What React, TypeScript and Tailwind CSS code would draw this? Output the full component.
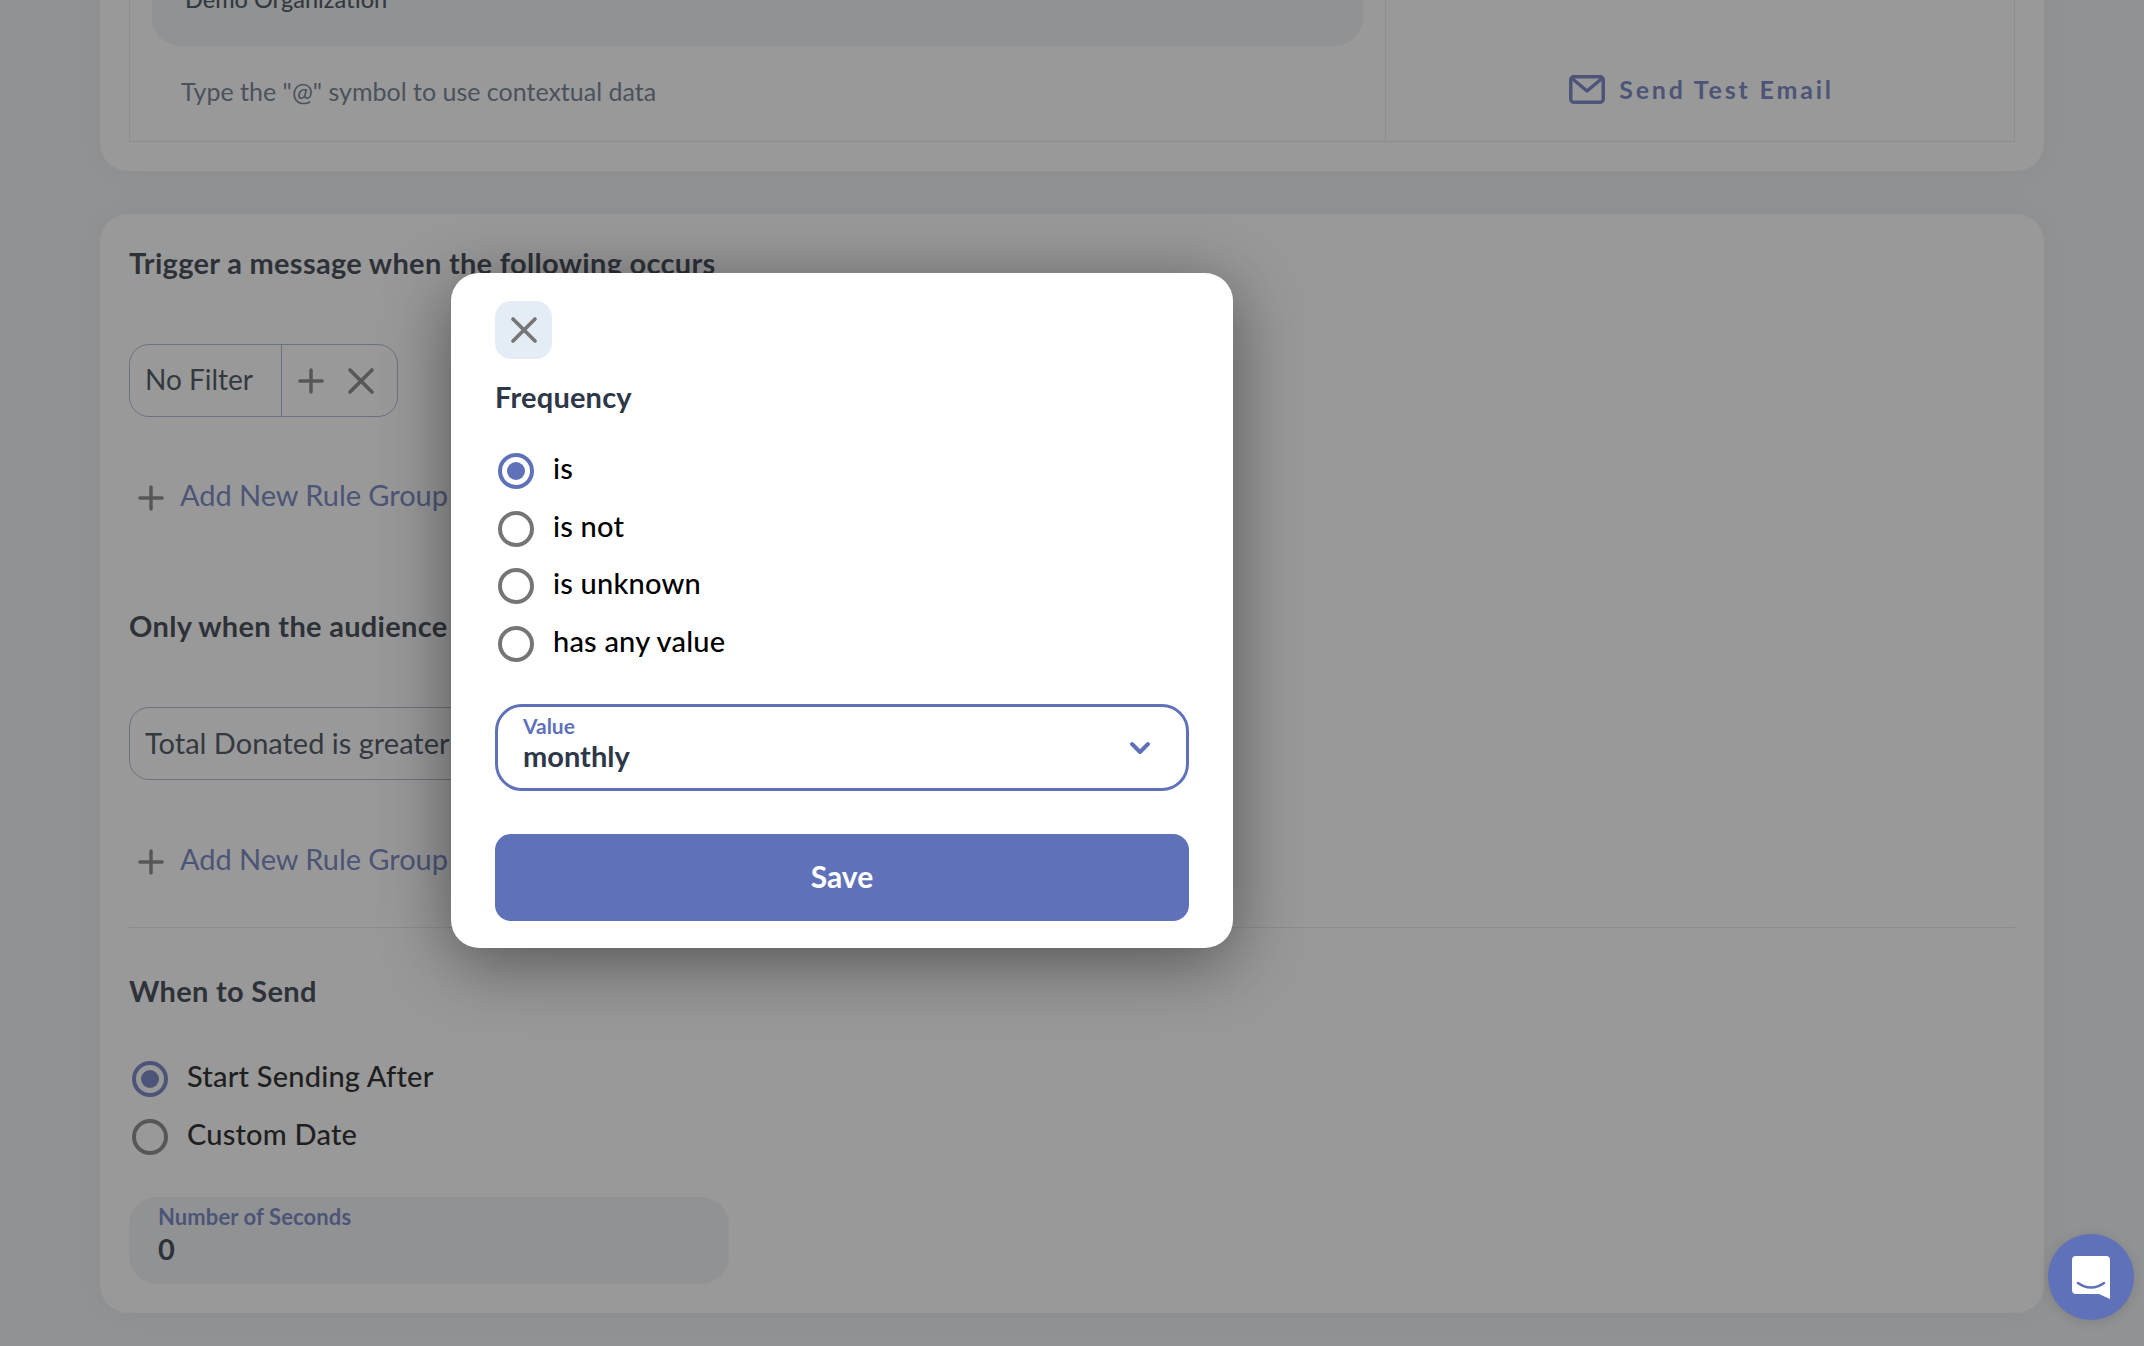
import { ChevronDown, Plus, X } from "lucide-react";

const Radio = ({ label, checked = false }: { label: string; checked?: boolean }) => (
  <div className="flex items-center gap-[19px]">
    <div
      className={`flex size-[36px] ml-[3px] shrink-0 items-center justify-center rounded-full border-[4px] bg-transparent ${
        checked ? "border-[#5f71b9]" : "border-[#757575]"
      }`}
    >
      {checked && <div className="size-[18px] rounded-full bg-[#5f71b9]" />}
    </div>
    <span className="pb-[6px] text-[29px] leading-[30px] font-medium tracking-[0.2px] text-black">{label}</span>
  </div>
);

const FilterBox = ({ children }: { children: React.ReactNode }) => (
  <div className="flex h-[73px] w-max items-stretch rounded-[20px] border border-[#9db0c4]">{children}</div>
);

const AddRule = () => (
  <div className="flex items-center gap-[10px] pl-[3px]">
    <Plus size={38} strokeWidth={2.2} className="relative top-[3px] text-[#757575]" />
    <span className="text-[29px] leading-[36px] tracking-[-0.05px] text-[#5f71b9]">Add New Rule Group</span>
  </div>
);

const Heading = ({ children }: { children: React.ReactNode }) => (
  <h2 className="text-[29px] leading-[36px] font-bold tracking-[0.3px] text-[#1f2937]">{children}</h2>
);

const App = () => {
  return (
    <div className="relative h-screen overflow-hidden bg-[#eef1f3] font-['Lato',sans-serif]">
      <div className="mx-[100px] -mt-[100px] flex flex-col gap-[43px]">
        <section className="rounded-[28px] bg-white px-[29px] pt-[10px] pb-[29px] shadow-[0_0_40px_rgba(0,0,0,0.06)]">
          <div className="flex border border-[#e2e6ea]">
            <div className="w-[1256px] border-r border-[#e2e6ea] px-[22px] pt-[36px] pb-[34px]">
              <div className="h-[99px] rounded-[28px] bg-[#eef1f3] px-[33px] pt-[34px]">
                <div className="text-[23.5px] leading-[36px] font-medium text-[#2d3748]">Demo Organization</div>
              </div>
              <p className="mt-[29px] pl-[29px] text-[25px] leading-[32px] text-[#5a6b7f]">
                Type the "@" symbol to use contextual data
              </p>
            </div>
            <div className="flex flex-1 items-end justify-center pb-[37px] pl-[3px]">
              <div className="flex items-center gap-[14px]">
                <svg width="36" height="29" viewBox="0 0 36 29" fill="none" stroke="#5f71b9" strokeWidth="3.5">
                  <rect x="1.75" y="1.75" width="32.5" height="25.5" rx="3" />
                  <path d="M2.5 3 L18 16 L33.5 3" strokeLinejoin="round" />
                </svg>
                <span className="text-[25px] leading-[30px] font-bold tracking-[2.8px] text-[#5f71b9]">Send Test Email</span>
              </div>
            </div>
          </div>
        </section>

        <section className="flex flex-col rounded-[28px] bg-white px-[29px] pt-[31px] pb-[29px] shadow-[0_0_40px_rgba(0,0,0,0.06)]">
          <Heading>Trigger a message when the following occurs</Heading>
          <div className="mt-[63px]">
            <FilterBox>
              <div className="flex w-[152px] items-center border-r border-[#9db0c4] pb-[3px] pl-[15px] text-[28px] leading-[36px] text-[#2d3748]">
                No Filter
              </div>
              <div className="flex w-[115px] items-center gap-[9px] pl-[10px]">
                <Plus size={38} strokeWidth={2.2} className="text-[#757575]" />
                <X size={44} strokeWidth={2} className="text-[#757575]" />
              </div>
            </FilterBox>
          </div>
          <div className="mt-[59px]">
            <AddRule />
          </div>
          <div className="mt-[94px]">
            <Heading>Only when the audience</Heading>
          </div>
          <div className="mt-[63px]">
            <FilterBox>
              <div className="flex w-[520px] items-center pb-[2px] pl-[15px] text-[29px] leading-[36px] text-[#2d3748]">
                Total Donated is greater
              </div>
            </FilterBox>
          </div>
          <div className="mt-[60px]">
            <AddRule />
          </div>
          <div className="mt-[49px] border-t border-[#e2e6ea]" />
          <div className="mt-[45px]">
            <Heading>When to Send</Heading>
          </div>
          <div className="mt-[52px] flex flex-col gap-[22px]">
            <Radio label="Start Sending After" checked />
            <Radio label="Custom Date" />
          </div>
          <div className="mt-[42px] h-[87px] w-[600px] rounded-[28px] bg-[#eef1f3] px-[29px] pt-[7px]">
            <div className="text-[22px] leading-[26px] font-bold tracking-[0.1px] text-[#5f71b9]">Number of Seconds</div>
            <div className="mt-[2px] text-[29px] leading-[34px] font-bold text-[#1f2937]">0</div>
          </div>
        </section>
      </div>

      <div className="absolute inset-0 bg-[rgba(60,60,60,0.52)]" />

      <div className="absolute top-[273px] left-[451px] flex w-[782px] flex-col rounded-[28px] bg-white px-[44px] pt-[28px] pb-[27px] shadow-[0_14px_70px_rgba(0,0,0,0.45)]">
        <button className="flex h-[58px] w-[57px] items-center justify-center rounded-[16px] bg-[#e4edf5]">
          <X size={44} strokeWidth={2} className="text-[#757575]" />
        </button>
        <h3 className="mt-[20px] text-[29px] leading-[36px] font-bold tracking-[0.2px] text-[#2d3748]">Frequency</h3>
        <div className="mt-[38px] flex flex-col gap-[21.67px]">
          <Radio label="is" checked />
          <Radio label="is not" />
          <Radio label="is unknown" />
          <Radio label="has any value" />
        </div>
        <div className="mt-[42px] flex h-[87px] items-center justify-between rounded-[27px] border-[3px] border-[#5f71b9] pr-[30px] pl-[25px]">
          <div className="pb-[8px]">
            <div className="text-[21px] leading-[24px] font-bold text-[#5f71b9]">Value</div>
            <div className="mt-[1px] text-[29px] leading-[34px] font-bold text-[#2d3748]">monthly</div>
          </div>
          <ChevronDown size={32} strokeWidth={3} className="relative top-[1px] text-[#5f71b9]" />
        </div>
        <button className="mt-[43px] h-[87px] rounded-[16px] bg-[#5f71b9] pb-[2px] text-[30px] font-bold text-white">Save</button>
      </div>

      <div className="absolute top-[1234px] left-[2048px] flex size-[86px] items-center justify-center rounded-full bg-[#5f71b9] shadow-[0_2px_12px_rgba(0,0,0,0.12)]">
        <svg width="38" height="43" viewBox="0 0 38 43">
          <path d="M4 0 H34 A4 4 0 0 1 38 4 V43 L27 38 H4 A4 4 0 0 1 0 34 V4 A4 4 0 0 1 4 0 Z" fill="#fff" />
          <path d="M6 27 C14 33 24 33 32 27" fill="none" stroke="#5f71b9" strokeWidth="2.6" strokeLinecap="round" />
        </svg>
      </div>
    </div>
  );
};

export default App;
